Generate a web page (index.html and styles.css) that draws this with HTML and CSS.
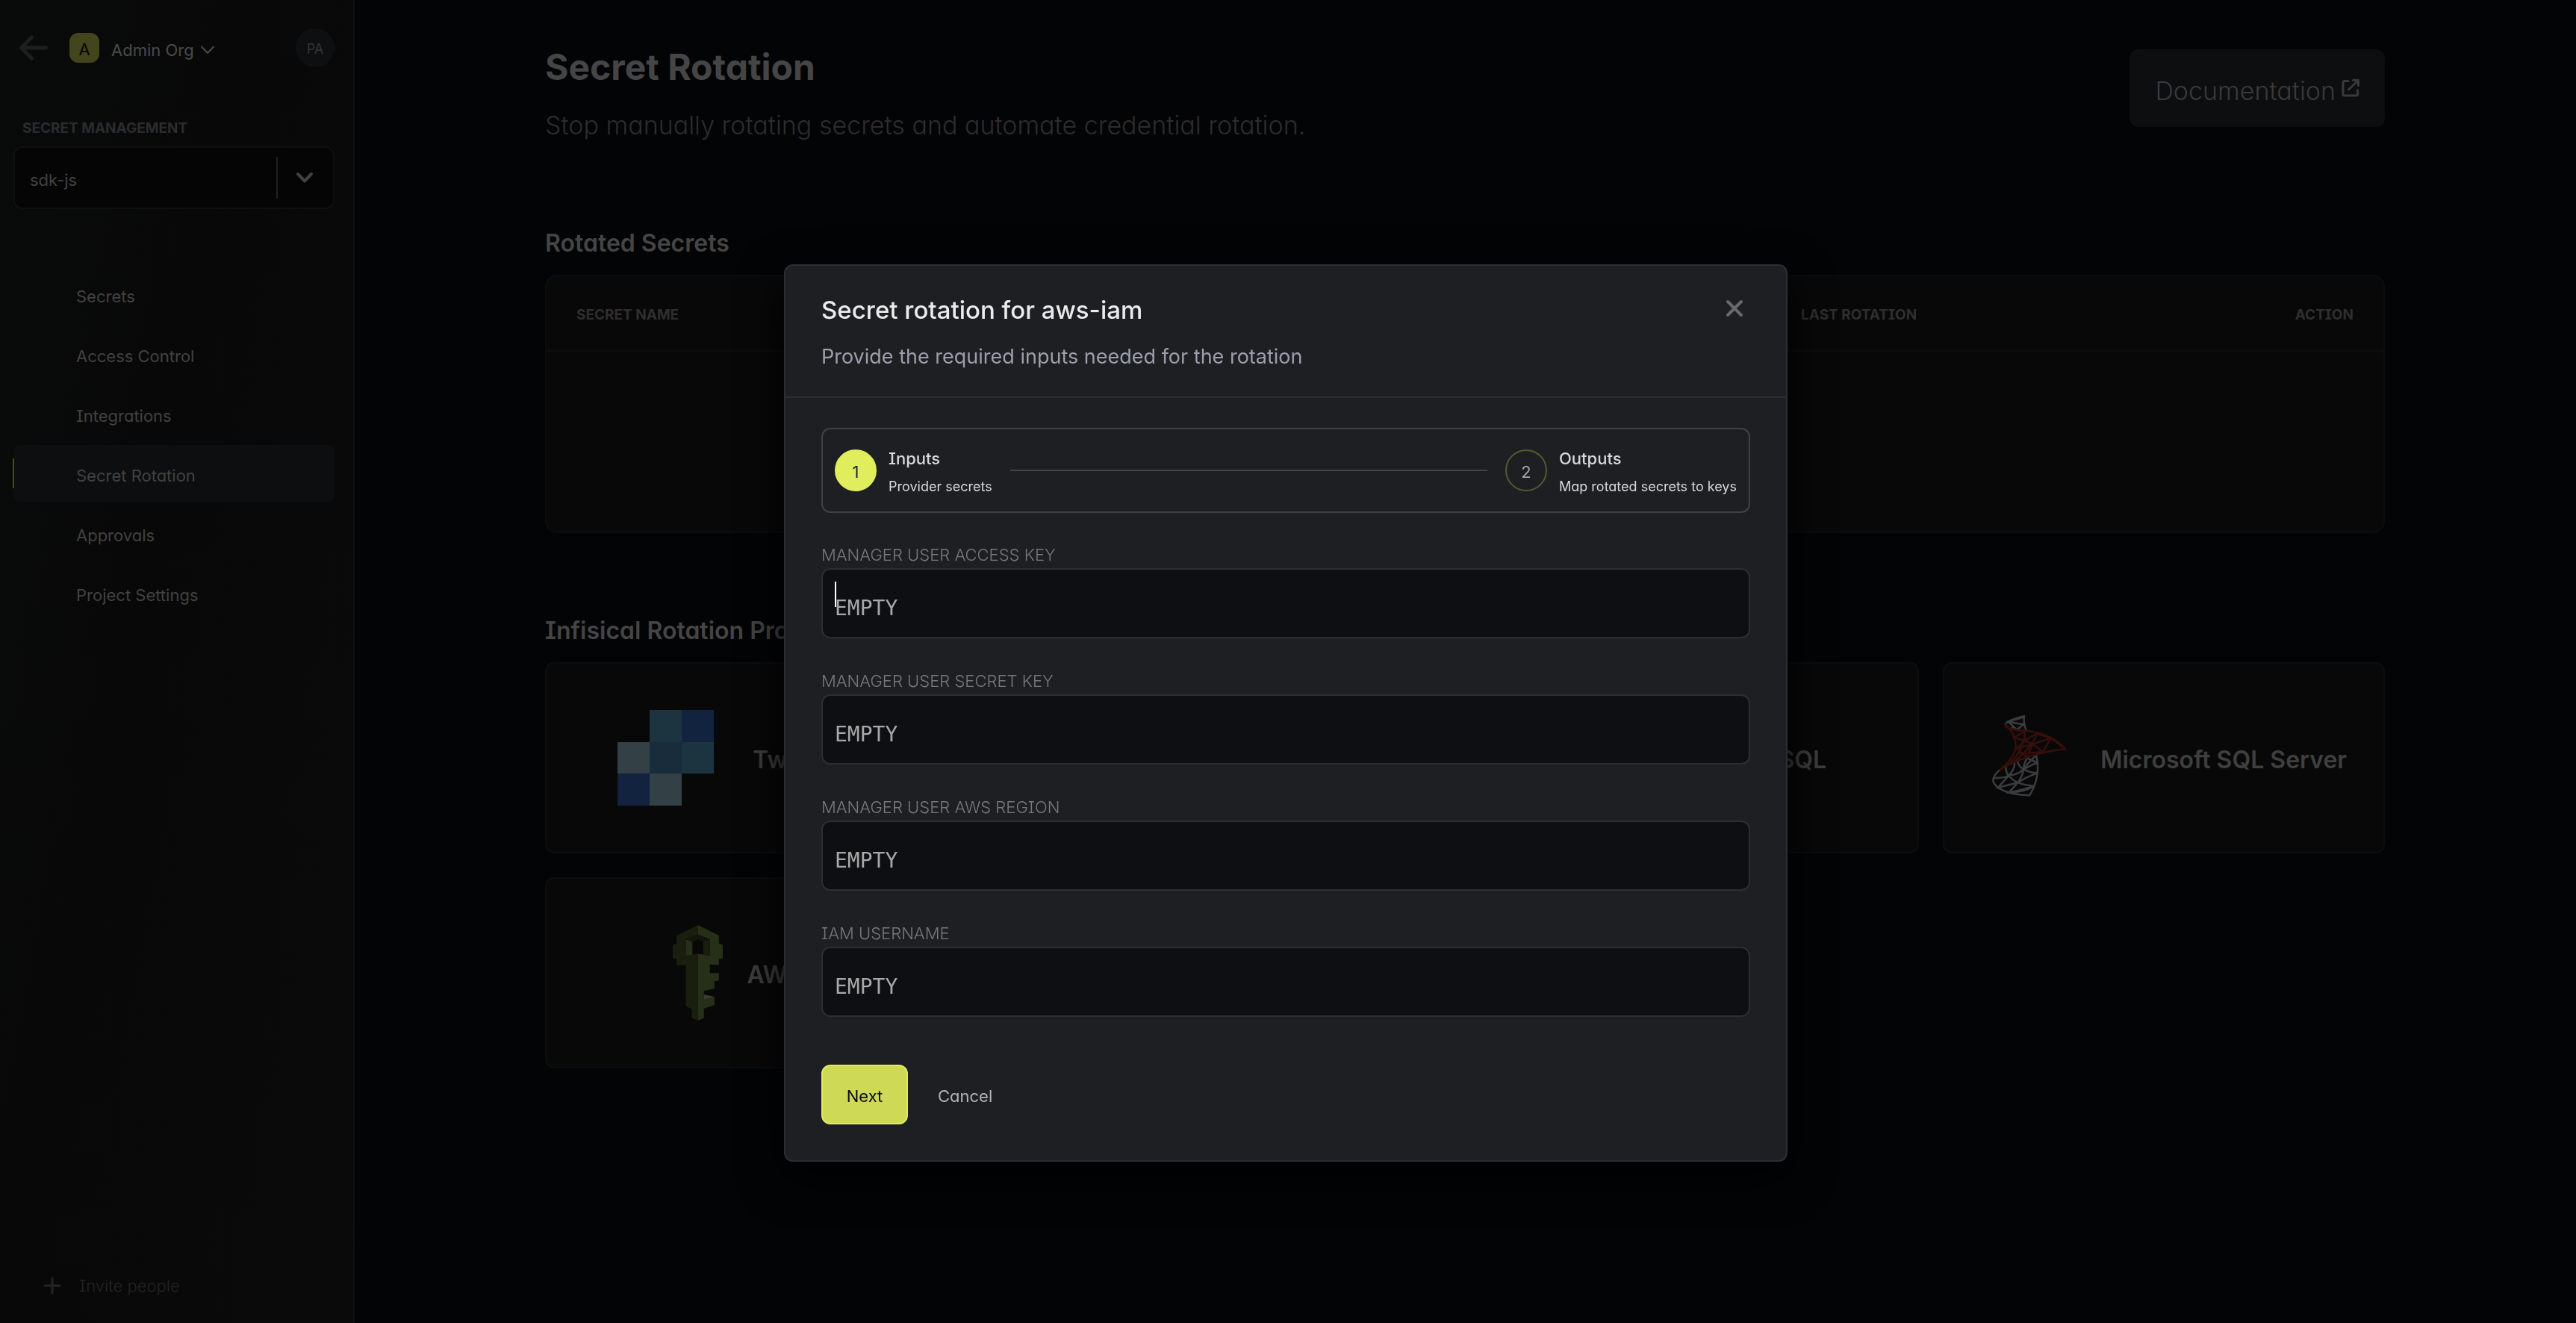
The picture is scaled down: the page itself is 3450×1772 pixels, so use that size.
FILE: index.html
```html
<!DOCTYPE html>
<html lang="en">
<head>
<meta charset="utf-8">
<meta name="viewport" content="width=device-width, initial-scale=1">
<title>Secret Rotation</title>
<link rel="stylesheet" href="styles.css">
</head>
<body>
<div class="app">
  <aside class="sidebar">
    <div class="org-row">
      <button class="icon-button" aria-label="Back">
        <svg width="40" height="34" viewBox="0 0 40 34" fill="none" stroke="currentColor" stroke-width="5" stroke-linecap="round" stroke-linejoin="round"><path d="M36.5 17H4M17.500 2.800 3.500 17l14 14.200"/></svg>
      </button>
      <span class="org-badge">A</span>
      <button class="org-name">Admin Org
        <svg width="20" height="12" viewBox="0 0 20 12" fill="none" stroke="currentColor" stroke-width="2" stroke-linecap="round" stroke-linejoin="round"><path d="M2 1.500l8 8.500 8-8.500"/></svg>
      </button>
      <button class="avatar">PA</button>
    </div>
    <label class="section-label" for="project">SECRET MANAGEMENT</label>
    <div class="project-select">
      <select id="project"><option>sdk-js</option></select>
      <span class="select-arrow">
        <svg width="24" height="16" viewBox="0 0 24 16" fill="none" stroke="currentColor" stroke-width="4" stroke-linecap="round" stroke-linejoin="round"><path d="M3 3l9 9.500L21 3"/></svg>
      </span>
    </div>
    <nav class="nav">
      <a href="#secrets">Secrets</a>
      <a href="#access">Access Control</a>
      <a href="#integrations">Integrations</a>
      <a href="#rotation" class="active">Secret Rotation</a>
      <a href="#approvals">Approvals</a>
      <a href="#settings">Project Settings</a>
    </nav>
    <button class="invite">
      <svg width="24" height="24" viewBox="0 0 24 24" fill="none" stroke="currentColor" stroke-width="3" stroke-linecap="round"><path d="M12 2v20M2 12h20"/></svg>
      <span>Invite people</span>
    </button>
  </aside>

  <main class="content">
    <header class="page-head">
      <div>
        <h1>Secret Rotation</h1>
        <p>Stop manually rotating secrets and automate credential rotation.</p>
      </div>
      <a class="docs" href="#docs"><span>Documentation</span>
        <svg width="24" height="24" viewBox="0 0 24 24" fill="none" stroke="currentColor" stroke-width="3" stroke-linecap="round" stroke-linejoin="round"><path d="M9 2.500H4A2 2 0 0 0 2 4.500v15.500a2 2 0 0 0 2 2h15.500a2 2 0 0 0 2-2V14.500M9.500 14 22 2M15.500 1.500H22.500V8.500"/></svg>
      </a>
    </header>

    <section class="rotated">
      <h2>Rotated Secrets</h2>
      <div class="table-box">
        <table>
          <thead>
            <tr><th>SECRET NAME</th><th></th><th></th><th></th><th>LAST ROTATION</th><th class="end">ACTION</th></tr>
          </thead>
          <tbody><tr><td colspan="6"></td></tr></tbody>
        </table>
      </div>
    </section>

    <section class="providers">
      <h2>Infisical Rotation Providers</h2>
      <div class="cards">
        <button class="card">
          <svg width="176" height="128" viewBox="0 0 176 128">
            <path fill="#1b3440" d="M70 0h43v43H70zM113 43h43v42h-43z"/>
            <path fill="#12233f" d="M113 0h43v43h-43zM27 85h43v43H27z"/>
            <path fill="#334045" d="M27 43h43v42H27zM70 85h43v43H70z"/>
            <path fill="#182c3c" d="M70 43h43v42H70z"/>
          </svg>
          <span>Twilio SendGrid</span>
        </button>
        <button class="card">
          <svg width="128" height="128" viewBox="0 0 128 128" fill="none" stroke="#1b2c3c" stroke-width="6"><ellipse cx="64" cy="28" rx="44" ry="16"/><path d="M20 28v72c0 22 88 22 88 0V28"/></svg>
          <span>PostgreSQL</span>
        </button>
        <button class="card">
          <svg width="200" height="128" viewBox="0 0 200 128" fill="none" stroke="#1b2c3c" stroke-width="6"><ellipse cx="100" cy="28" rx="44" ry="16"/><path d="M56 28v72c0 22 88 22 88 0V28"/></svg>
          <span>MySQL</span>
        </button>
        <button class="card">
          <svg class="mssql" width="128" height="128" viewBox="536 303 228 384" preserveAspectRatio="none" fill="none">
            <g stroke="#3b3c3e" stroke-width="2.500">
              <path d="M594 364Q596 344 639 328Q637 360 645 387M601 350L638 361L622 382L601 350L639 332M622 382L609 372"/>
              <path d="M580 545Q560 575 567 597Q585 642 652 646Q680 570 668 485M567 576Q590 577 602 567Q625 562 638 541Q655 525 670 514L645 495M638 541Q655 556 671 556Q640 575 624 595Q600 605 577 614L602 567Q612 585 624 595Q642 606 662 608Q635 625 603 634L624 595Q636 565 638 541Q622 525 624 503M596 532Q594 550 602 567M616 512Q618 540 602 567M668 485Q648 515 638 541M645 500Q638 520 638 541M603 634Q640 634 662 608"/>
            </g>
            <g stroke="#360f0c" stroke-width="2.500">
              <path d="M594 362Q592 380 645 386Q705 398 737 459Q640 480 580 545Q614 500 619 455Q620 400 594 362"/>
              <path d="M600 378L640 389L616 413L641 426L669 398L703 416L660 440L684 471L703 416L737 459M669 398L641 426L660 440M640 389L641 426L621 458L660 440M641 426L616 413M616 413L660 440L645 492L621 458L641 426M669 398Q665 440 616 510M630 480L684 471M640 389Q645 450 602 523"/>
            </g>
          </svg>
          <span>Microsoft SQL Server</span>
        </button>
        <button class="card">
          <svg width="67" height="128" viewBox="603 1043 198 303" preserveAspectRatio="none">
            <path fill="#191e0f" d="M703 1043L618 1076V1102L603 1106V1149L618 1151V1170H655V1300L678 1310V1338L703 1346V1134L655 1140V1088L703 1074Z"/>
            <path fill="#262f17" d="M703 1043L786 1076V1101L801 1106V1149L786 1151V1170L750 1168V1195H786V1219L768 1221V1244L726 1252V1280L768 1270V1296L726 1308V1338L703 1346V1134L750 1140V1088L703 1074ZM655 1088L681 1096V1137L655 1140Z"/>
            <path fill="#191e0f" d="M724 1096L750 1088V1140L724 1137Z"/>
            <path fill="#12150b" d="M655 1088L703 1074L750 1088L724 1096L703 1088L681 1096Z"/>
            <path fill="#3a3a37" d="M726 1263L768 1270L726 1280Z"/>
          </svg>
          <span>AWS IAM</span>
        </button>
      </div>
    </section>
  </main>
</div>

<div class="overlay">
  <div class="modal" role="dialog" aria-modal="true" aria-labelledby="modal-title">
    <header class="modal-head">
      <div>
        <h3 id="modal-title">Secret rotation for aws-iam</h3>
        <p>Provide the required inputs needed for the rotation</p>
      </div>
      <button class="close" aria-label="Close">
        <svg width="24" height="24" viewBox="0 0 24 24" fill="none" stroke="currentColor" stroke-width="4" stroke-linecap="round"><path d="M3 3l18 18M21 3L3 21"/></svg>
      </button>
    </header>
    <form class="modal-body" autocomplete="off">
      <div class="stepper">
        <div class="step current"><span class="dot">1</span><div class="step-text"><strong>Inputs</strong><small>Provider secrets</small></div></div>
        <div class="step-line"></div>
        <div class="step"><span class="dot">2</span><div class="step-text"><strong>Outputs</strong><small>Map rotated secrets to keys</small></div></div>
      </div>
      <div class="fields">
        <div class="field">
          <label for="access-key">MANAGER USER ACCESS KEY</label>
          <div class="input-wrap"><input id="access-key" type="text" placeholder="EMPTY"><span class="caret"></span></div>
        </div>
        <div class="field">
          <label for="secret-key">MANAGER USER SECRET KEY</label>
          <div class="input-wrap"><input id="secret-key" type="text" placeholder="EMPTY"></div>
        </div>
        <div class="field">
          <label for="region">MANAGER USER AWS REGION</label>
          <div class="input-wrap"><input id="region" type="text" placeholder="EMPTY"></div>
        </div>
        <div class="field">
          <label for="username">IAM USERNAME</label>
          <div class="input-wrap"><input id="username" type="text" placeholder="EMPTY"></div>
        </div>
      </div>
      <div class="actions">
        <button class="next" type="button">Next</button>
        <button class="cancel" type="button">Cancel</button>
      </div>
    </form>
  </div>
</div>
</body>
</html>
```
FILE: styles.css
```css
* { box-sizing: border-box; }

body {
  margin: 0;
  background: #030406;
  color: #454545;
  font-family: Inter, "Liberation Sans", sans-serif;
  font-feature-settings: "cv11", "cv08";
  font-size: 22px;
  line-height: 28px;
}

h1, h2, h3, p { margin: 0; }
a { color: inherit; text-decoration: none; }
svg { display: block; flex: none; }

button, select, input {
  margin: 0;
  padding: 0;
  border: 0;
  background: none;
  color: inherit;
  font: inherit;
  font-feature-settings: inherit;
}

.app {
  display: grid;
  grid-template-columns: 475px minmax(0, 1fr);
  min-height: 100vh;
}

/* Sidebar */
.sidebar {
  display: flex;
  flex-direction: column;
  padding: 38px 25px 36px 18px;
  border-right: 2px solid #101010;
  background: linear-gradient(100deg, #090b0a, #080808 40%, #0a0a0a);
}

.org-row {
  display: flex;
  align-items: center;
  height: 52px;
  margin-bottom: 70px;
  padding-left: 7px;
}

.icon-button { color: #1d1e20; }

.org-badge {
  display: flex;
  align-items: center;
  justify-content: center;
  width: 40px;
  height: 40px;
  margin-left: 28px;
  padding-top: 4px;
  border-radius: 12px;
  background: #43461c;
  color: #030303;
}

.org-name {
  display: flex;
  align-items: center;
  gap: 8px;
  margin-left: 16px;
  padding-top: 6px;
  color: #4a4a4a;
}

.avatar {
  width: 52px;
  height: 52px;
  margin-left: auto;
  padding-top: 4px;
  border-radius: 50%;
  background: #0e0f11;
  color: #343536;
  font-size: 18px;
}

.section-label {
  margin: 0 0 12px 12px;
  color: #2b2c2f;
  font-size: 19px;
  font-weight: 700;
  line-height: 24px;
}

.project-select {
  display: flex;
  height: 84px;
  padding: 12px 0;
  border: 2px solid #0f0f0f;
  border-radius: 12px;
  background: #050505;
  color: #424242;
}

.project-select select {
  flex: 1;
  appearance: none;
  padding: 6px 20px 0;
}

.select-arrow {
  display: flex;
  align-items: center;
  padding: 0 26px 0 24px;
  border-left: 2px solid #202020;
}

.nav {
  display: flex;
  flex-direction: column;
  gap: 4px;
  margin-top: 76px;
}

.nav a {
  position: relative;
  display: flex;
  align-items: center;
  height: 76px;
  padding: 6px 0 0 84px;
  border-radius: 8px;
  color: #424242;
}

.nav .active { background: #0d0e10; }

.nav .active::before {
  content: "";
  position: absolute;
  top: 18px;
  left: -1px;
  width: 2px;
  height: 40px;
  background: #484b1c;
}

.invite {
  display: flex;
  align-items: center;
  gap: 24px;
  margin-top: auto;
  padding-left: 40px;
  color: #242424;
  font-weight: 300;
}

/* Page */
.content { padding: 62px 256px 64px 255px; }

.page-head {
  display: flex;
  align-items: flex-start;
  justify-content: space-between;
  margin-bottom: 114px;
}

h1 {
  margin-bottom: 26px;
  color: #454545;
  font-size: 48px;
  font-weight: 700;
  line-height: 56px;
}

.page-head p {
  color: #2d2d2d;
  font-size: 34px;
  font-weight: 300;
  line-height: 48px;
}

.docs {
  display: flex;
  align-items: center;
  gap: 8px;
  height: 104px;
  margin-top: 4px;
  padding: 0 34px;
  border-radius: 12px;
  background: #0d0e10;
  color: #3a3a3a;
  font-size: 34px;
  font-weight: 300;
  line-height: 48px;
}

.docs span { padding-top: 8px; }

h2 {
  margin-bottom: 22px;
  font-size: 32px;
  font-weight: 600;
  line-height: 40px;
}

.rotated { margin-bottom: 111px; }

.table-box {
  overflow: hidden;
  border: 2px solid #0c0c0d;
  border-radius: 16px;
  background: #080808;
}

table {
  width: 100%;
  table-layout: fixed;
  border-collapse: collapse;
}

th {
  height: 100px;
  padding: 6px 40px 0;
  border-bottom: 4px solid #0c0c0d;
  color: #2f2f2f;
  font-size: 19px;
  font-weight: 700;
  line-height: 24px;
  text-align: left;
}

th.end { text-align: right; }
td { height: 242px; padding: 0; }

.cards {
  display: grid;
  grid-template-columns: repeat(4, minmax(0, 1fr));
  gap: 32px;
}

.card {
  display: flex;
  align-items: center;
  justify-content: center;
  gap: 32px;
  height: 256px;
  border: 2px solid #0d0d0d;
  border-radius: 12px;
  background: #080808;
  color: #3f3f3f;
  font-size: 32px;
  font-weight: 600;
  line-height: 40px;
}

.card span { padding-top: 6px; }
.mssql path { vector-effect: non-scaling-stroke; }

/* Modal */
.overlay {
  position: fixed;
  inset: 0;
  display: flex;
  align-items: flex-start;
  justify-content: center;
  padding: 354px 6px 0 0;
  overflow: auto;
}

.modal {
  width: 1344px;
  max-width: 100%;
  border: 2px solid #2d2e31;
  border-radius: 12px;
  background: #1e1f23;
  box-shadow: 0 20px 60px #000000;
}

.modal-head {
  display: flex;
  align-items: flex-start;
  justify-content: space-between;
  padding: 37px 57px 35px 48px;
  border-bottom: 2px solid #2d2e31;
  font-feature-settings: normal;
}

.modal-head h3 {
  margin-bottom: 23px;
  color: #ebebeb;
  font-size: 33px;
  font-weight: 500;
  line-height: 44px;
}

.modal-head p {
  color: #9a9fab;
  font-size: 27px;
  line-height: 36px;
}

.close {
  margin-top: 8px;
  color: #68696c;
}

.modal-body { padding: 40px 48px 48px; }

.stepper {
  display: flex;
  align-items: center;
  height: 114px;
  margin-bottom: 42px;
  padding: 0 16px;
  border: 2px solid #414246;
  border-radius: 12px;
}

.step {
  display: flex;
  align-items: center;
  gap: 16px;
}

.dot {
  display: flex;
  align-items: center;
  justify-content: center;
  width: 56px;
  height: 56px;
  padding-top: 4px;
  border: 2px solid #55592f;
  border-radius: 50%;
  color: #a3a4a6;
}

.current .dot {
  border-color: #e0ed5c;
  background: #e0ed5c;
  color: #1e1f23;
}

.step-text {
  display: flex;
  flex-direction: column;
  gap: 12px;
  padding-top: 4px;
  color: #d8d8d9;
}

.step-text strong { font-weight: 500; }

.step-text small {
  font-size: 18px;
  line-height: 24px;
}

.step-line {
  flex: 1;
  height: 2px;
  margin: 0 24px;
  background: #434448;
}

.fields {
  display: flex;
  flex-direction: column;
  gap: 43px;
}

.field {
  display: flex;
  flex-direction: column;
  gap: 4px;
}

.field label {
  color: #77787c;
  font-weight: 300;
}

.input-wrap { position: relative; }

input {
  display: block;
  width: 100%;
  height: 94px;
  padding: 12px 16px 0;
  border: 2px solid #2d2e32;
  border-radius: 12px;
  background: #0e0f12;
  color: #ebebeb;
  font-family: "DejaVu Sans Mono", monospace;
  font-size: 28px;
  line-height: 34px;
}

input::placeholder { color: #a8a8a8; opacity: 1; }

.caret {
  position: absolute;
  top: 18px;
  left: 18px;
  width: 2px;
  height: 34px;
  background: #ffffff;
}

.actions {
  display: flex;
  gap: 40px;
  margin-top: 64px;
}

.next {
  width: 116px;
  height: 80px;
  padding-top: 4px;
  border: 2px solid #dfec5c;
  border-radius: 12px;
  background: #ced956;
  color: #0c0d06;
}

.cancel {
  padding-top: 4px;
  color: #b2b2b3;
}
```
